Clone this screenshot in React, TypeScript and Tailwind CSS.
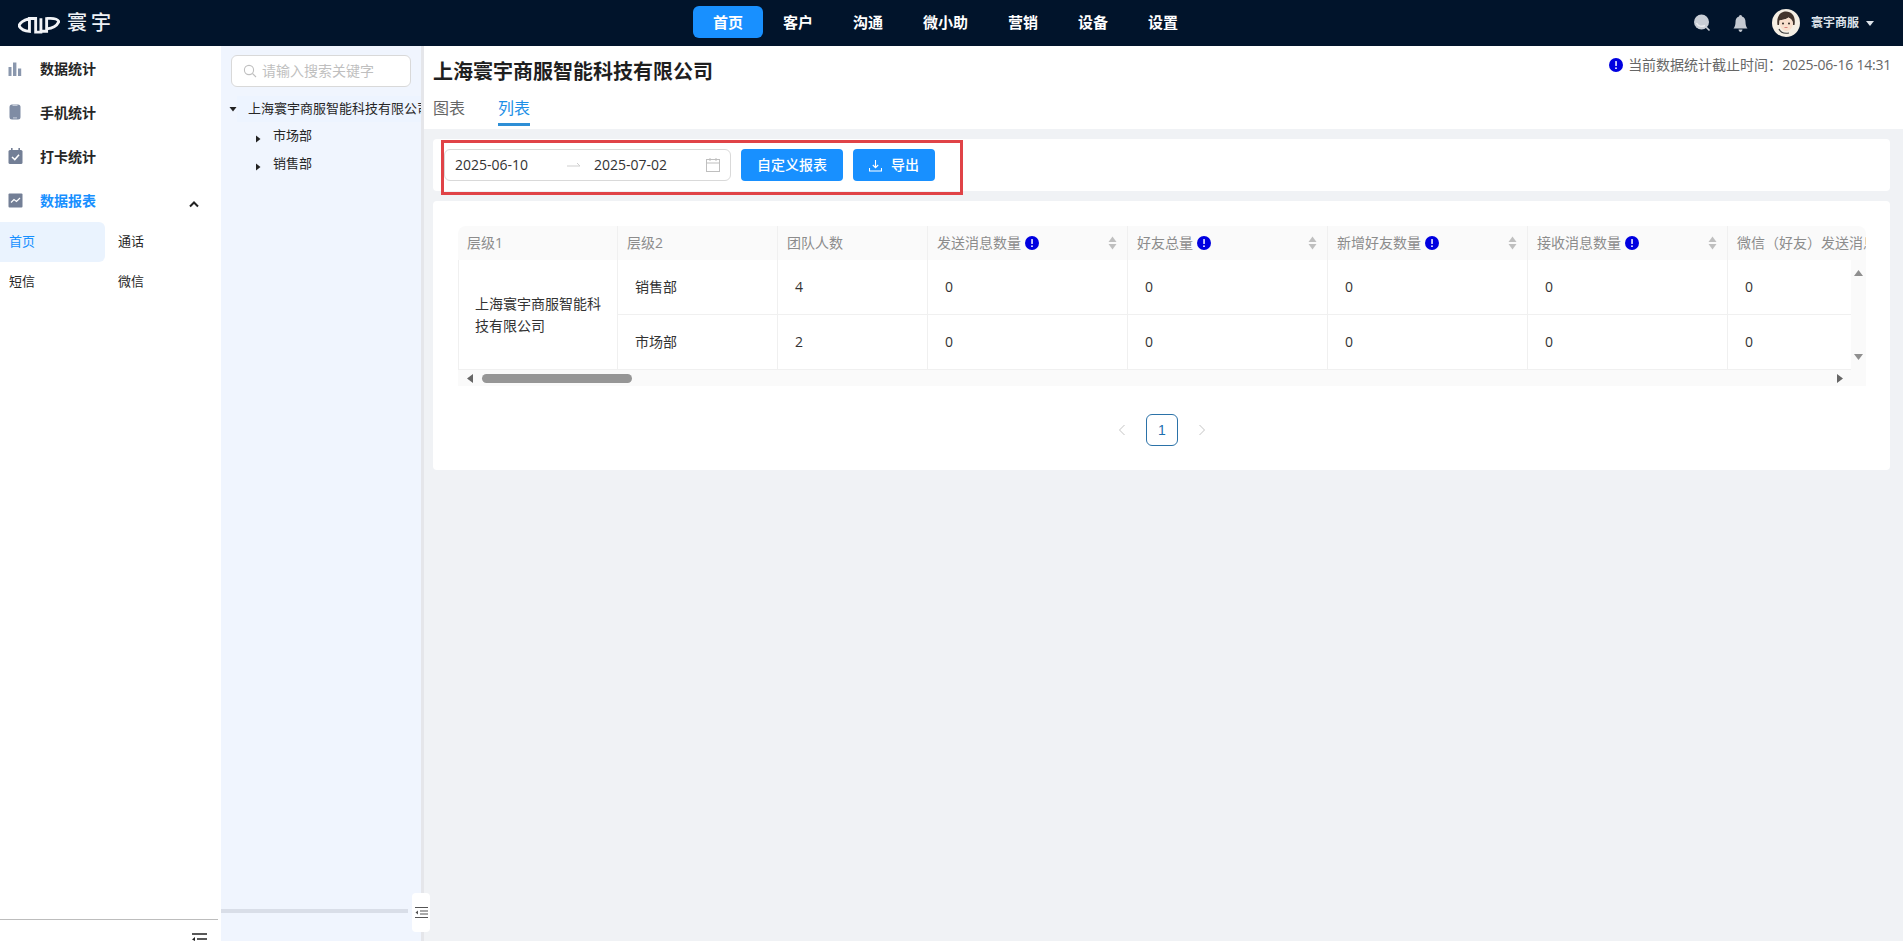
import React from "react";

const FONT = "font-['Open_Sans','Noto_Sans_CJK_SC',sans-serif]";

function Logo() {
  return (
    <svg width="42" height="18" viewBox="0 0 44 18" fill="none" stroke="#f2f4f7" strokeWidth="3" className="mt-[3px]">
      <path d="M11 2.5 C6 4 2 6.5 1 9.8 C3 13.5 8 15.5 12 15.7 V2.2 H18.5 V16.5 H24 V2 M24 15.5 H30 V1" />
      <path d="M30 2 H34 C38.5 2 42 3.5 42.8 5.5 C41 9.5 36.5 12.5 30 13" />
    </svg>
  );
}

function Avatar() {
  return (
    <svg width="28" height="28" viewBox="0 0 28 28">
      <circle cx="14" cy="14" r="14" fill="#f5efe4" />
      <path d="M5.5 16 C4 6 9.5 2.5 14 2.5 C20 2.5 24 7.5 22.5 16 L21 16 C21 11 18.5 9.5 16.5 8.5 C14 10.5 10.5 11 7.5 11.5 L7 16 Z" fill="#43352d" />
      <path d="M7.5 11.5 C10.5 11 14 10.5 16.5 8.5 C18.5 9.5 21 11 21 15 C20.5 19.5 17 22 14 22 C10.5 22 7.5 18.5 7.5 11.5 Z" fill="#f8dfcc" />
      <circle cx="11" cy="14.5" r="1" fill="#2e2622" />
      <circle cx="17" cy="14.5" r="1" fill="#2e2622" />
      <path d="M12.5 18.5 H15.5" stroke="#c66" strokeWidth="0.8" />
      <path d="M7 20 C9 24.5 14 24.5 17 24" stroke="#3d3d3d" strokeWidth="1.2" fill="none" />
    </svg>
  );
}

function Info({ size = 13 }: { size?: number }) {
  return (
    <svg width={size} height={size} viewBox="0 0 14 14" className="shrink-0">
      <circle cx="7" cy="7" r="7" fill="#0000e0" />
      <rect x="6.3" y="3" width="1.5" height="5" rx="0.6" fill="#fff" />
      <circle cx="7" cy="10.2" r="0.9" fill="#fff" />
    </svg>
  );
}

function Sort() {
  return (
    <svg width="9" height="14" viewBox="0 0 9 14" className="shrink-0">
      <path d="M4.5 0.5 L8.5 6 H0.5 Z" fill="#bfbfbf" />
      <path d="M4.5 13.5 L8.5 8 H0.5 Z" fill="#bfbfbf" />
    </svg>
  );
}

function Caret({ down }: { down?: boolean }) {
  return (
    <svg width="8" height="8" viewBox="0 0 8 8" className="shrink-0">
      {down ? <path d="M0.5 2 H7.5 L4 6.5 Z" fill="#222" /> : <path d="M2 0.5 V7.5 L6.5 4 Z" fill="#222" />}
    </svg>
  );
}

const navIcons: Record<string, React.ReactNode> = {
  bar: (
    <svg width="14" height="14" viewBox="0 0 14 14" fill="#8a97ad">
      <rect x="0.5" y="5" width="3" height="9" />
      <rect x="5" y="0.5" width="3.4" height="13.5" />
      <rect x="10" y="6.5" width="3.2" height="7.5" />
    </svg>
  ),
  phone: (
    <svg width="14" height="16" viewBox="0 0 14 16" className="-mt-[2px]">
      <rect x="1.5" y="0.5" width="11" height="15" rx="2.5" fill="#7f8ca4" />
      <rect x="4.5" y="0.5" width="5" height="1.4" fill="#c9d0dc" />
      <rect x="5" y="13.4" width="4" height="1" fill="#c9d0dc" />
    </svg>
  ),
  check: (
    <svg width="15" height="16" viewBox="0 0 15 16" className="-mt-[2px]">
      <rect x="0.5" y="2" width="14" height="14" rx="1.5" fill="#737f96" />
      <rect x="3" y="0" width="1.6" height="3.5" fill="#737f96" />
      <rect x="10.4" y="0" width="1.6" height="3.5" fill="#737f96" />
      <path d="M4 9 L6.8 11.6 L11 6.8" stroke="#fff" strokeWidth="1.5" fill="none" />
    </svg>
  ),
  line: (
    <svg width="15" height="15" viewBox="0 0 15 15" className="-mt-[2px]">
      <rect x="0.5" y="0.5" width="14" height="14" rx="1" fill="#737f96" />
      <path d="M3 9.5 L6 6.5 L8.5 8.5 L12 5" stroke="#fff" strokeWidth="1.2" fill="none" />
    </svg>
  ),
};

function NavItem({ icon, label, active, extra }: { icon: string; label: string; active?: boolean; extra?: React.ReactNode }) {
  return (
    <div className="flex h-11 items-center pl-2 pr-5">
      <span className="flex w-[32px] items-center">{navIcons[icon]}</span>
      <span className={`text-sm font-bold ${active ? "text-[#1890ff]" : "text-[#262626]"}`}>{label}</span>
      {extra}
    </div>
  );
}

const columns = [
  { label: "层级1", w: "w-[160px]" },
  { label: "层级2", w: "w-[160px]" },
  { label: "团队人数", w: "w-[150px]" },
  { label: "发送消息数量", w: "w-[200px]", sort: true },
  { label: "好友总量", w: "w-[200px]", sort: true },
  { label: "新增好友数量", w: "w-[200px]", sort: true },
  { label: "接收消息数量", w: "w-[200px]", sort: true },
  { label: "微信（好友）发送消息数量", w: "w-[200px]" },
];

function Row({ name, count, last }: { name: string; count: string; last?: boolean }) {
  const cell = "flex shrink-0 items-center border-r border-[#f0f0f0] pl-[17px]";
  return (
    <div className={`flex text-sm text-[#333] ${last ? "h-[54px]" : "h-[55px] border-b border-[#f0f0f0]"}`}>
      <div className={`${cell} w-[160px]`}>{name}</div>
      <div className={`${cell} w-[150px]`}>{count}</div>
      <div className={`${cell} w-[200px]`}>0</div>
      <div className={`${cell} w-[200px]`}>0</div>
      <div className={`${cell} w-[200px]`}>0</div>
      <div className={`${cell} w-[200px]`}>0</div>
      <div className={`${cell} w-[200px]`}>0</div>
    </div>
  );
}

export default function App() {
  return (
    <div className={`${FONT} flex h-[941px] w-[1903px] flex-col overflow-hidden bg-[#f0f2f5]`}>
      {/* Top bar */}
      <header className="relative flex h-[46px] shrink-0 items-center bg-[#01142b]">
        <div className="flex items-center pl-[18px]">
          <Logo />
          <span className="ml-[7px] text-[20px] font-medium tracking-[4px] text-[#eef1f5]">寰宇</span>
        </div>
        <nav className="absolute left-[693px] top-[6px] flex text-[15px] font-bold text-white">
          <span className="flex h-8 items-center rounded-md bg-[#1890ff] px-5">首页</span>
          {["客户", "沟通", "微小助", "营销", "设备", "设置"].map((t) => (
            <span key={t} className="flex h-8 items-center px-5">{t}</span>
          ))}
        </nav>
        <div className="ml-auto flex items-center pr-[29px]">
          <svg width="18" height="18" viewBox="0 0 18 18" className="mr-[22px]">
            <circle cx="8.5" cy="8" r="7.5" fill="#c9ced6" />
            <path d="M3.5 9 C5 12.5 9 13 12 11.5" stroke="#e9ebee" strokeWidth="1.5" fill="none" />
            <path d="M13 13 L16.5 16.5" stroke="#c9ced6" strokeWidth="1.6" />
          </svg>
          <svg width="15" height="19" viewBox="0 0 15 19" className="mr-[24px]">
            <path d="M7.5 1 C8.6 1 9 1.8 9 2.6 C11.5 3.4 12.5 5.5 12.5 8 C12.5 11 13.2 13 14.5 14.5 H0.5 C1.8 13 2.5 11 2.5 8 C2.5 5.5 3.5 3.4 6 2.6 C6 1.8 6.4 1 7.5 1 Z" fill="#c4c9d1" />
            <path d="M5.5 15.5 H9.5 C9.3 17 8.5 18 7.5 18 C6.5 18 5.7 17 5.5 15.5 Z" fill="#c4c9d1" />
          </svg>
          <Avatar />
          <span className="ml-[11px] text-xs font-bold text-[#dde3ea]">寰宇商服</span>
          <svg width="8" height="5" viewBox="0 0 8 5" className="ml-[7px]"><path d="M0 0 H8 L4 5 Z" fill="#dde3ea" /></svg>
        </div>
      </header>

      <div className="flex min-h-0 flex-1">
        {/* Left nav */}
        <aside className="relative flex w-[221px] shrink-0 flex-col bg-white pt-[1px]">
          <NavItem icon="bar" label="数据统计" />
          <NavItem icon="phone" label="手机统计" />
          <NavItem icon="check" label="打卡统计" />
          <NavItem
            icon="line"
            label="数据报表"
            active
            extra={
              <svg width="10" height="7" viewBox="0 0 10 7" className="ml-auto mr-[2px] mt-[6px]">
                <path d="M1 5.5 L5 1.5 L9 5.5" stroke="#222" strokeWidth="2" fill="none" />
              </svg>
            }
          />
          <div className="mt-[-1px] grid grid-cols-[105px_1fr] text-[13px] text-[#262626]">
            <div className="flex h-10 items-center rounded-r-md bg-[#eaf3fe] pl-[9px] text-[#1890ff]">首页</div>
            <div className="flex h-10 items-center pl-[13px]">通话</div>
            <div className="flex h-10 items-center pl-[9px]">短信</div>
            <div className="flex h-10 items-center pl-[13px]">微信</div>
          </div>
          <div className="absolute bottom-[21px] left-0 right-[3px] h-px bg-[#bdbdbd]" />
          <svg width="15" height="8" viewBox="0 0 15 8" className="absolute bottom-0 left-[192px]">
            <path d="M0 1 H15 M5 6 H15" stroke="#222" strokeWidth="1.4" />
            <path d="M3 4 L0 6.5 L3 8 Z" fill="#222" />
          </svg>
        </aside>

        {/* Tree panel */}
        <section className="relative flex w-[203px] shrink-0 flex-col overflow-visible border-r-[3px] border-[#e5e6ea] bg-[#f0f5fe]">
          <div className="mx-[10px] mt-[9px] flex h-8 w-[180px] items-center rounded-md border border-[#d9d9d9] bg-white pl-[11px] text-sm text-[#bfbfbf]">
            <svg width="14" height="14" viewBox="0 0 14 14" fill="none" stroke="#bfbfbf" strokeWidth="1.1" className="mr-[5px]">
              <circle cx="6" cy="6" r="4.6" />
              <path d="M9.5 9.5 L13 13" />
            </svg>
            请输入搜索关键字
          </div>
          <div className="mt-[9px] flex h-[26px] w-full items-center overflow-hidden pl-[8px] text-[13px] text-[#262626]">
            <span className="flex w-[11px]"><Caret down /></span>
            <span className="flex h-full flex-1 items-center whitespace-nowrap bg-[#edf4ff] pl-[11px]">上海寰宇商服智能科技有限公司</span>
          </div>
          {["市场部", "销售部"].map((t) => (
            <div key={t} className="flex h-7 items-center pl-[33px] text-[13px] text-[#262626]">
              <span className="mt-[5px] flex w-[19px]"><Caret /></span>
              {t}
            </div>
          ))}
          <div className="absolute bottom-[28px] left-0 h-1 w-[187px] bg-[#d9dee8]" />
          <div className="absolute bottom-[9px] left-[191px] z-10 flex h-[39px] w-[18px] items-center justify-center rounded-[4px] bg-white">
            <svg width="13" height="13" viewBox="0 0 13 13" stroke="#555" strokeWidth="1.1">
              <path d="M0 1.5 H13 M5 5 H13 M5 8 H13 M0 11.5 H13" />
              <path d="M3 4.5 L0.5 6.5 L3 8.5 Z" fill="#555" stroke="none" />
            </svg>
          </div>
        </section>

        {/* Main */}
        <main className="relative flex min-w-0 flex-1 flex-col">
          <div className="relative h-[83px] shrink-0 bg-white pl-[9px]">
            <h1 className="pt-[11px] text-xl leading-[30px] font-bold text-[#1f1f1f]">上海寰宇商服智能科技有限公司</h1>
            <div className="mt-[9px] flex text-base leading-6 text-[#666]">
              <span className="w-[65px]">图表</span>
              <span className="relative text-[#1d8fe6]">
                列表
                <span className="absolute -bottom-[6px] left-0 right-0 h-[3px] bg-[#2e8fd6]" />
              </span>
            </div>
            <div className="absolute right-[12px] top-[9px] flex items-center text-sm text-[#666]">
              <Info size={14} />
              <span className="ml-[5px]">当前数据统计截止时间：<span className="tracking-[-0.22px]">2025-06-16 14:31</span></span>
            </div>
          </div>

          <div className="ml-[9px] mr-[13px] mt-[10px] flex h-[52px] shrink-0 items-center rounded-[4px] bg-white pl-[11px]">
            <div className="flex h-8 w-[287px] items-center rounded-md border border-[#d9d9d9] pl-[10px] text-sm text-[#333]">
              <span className="w-[112px]">2025-06-10</span>
              <svg width="14" height="8" viewBox="0 0 14 8" fill="none" stroke="#cfcfcf" strokeWidth="1" className="mr-[13px]">
                <path d="M0 5 H13 M10 2 L13 5" />
              </svg>
              <span>2025-07-02</span>
              <svg width="14" height="14" viewBox="0 0 14 14" fill="none" stroke="#bfbfbf" className="ml-auto mr-[10px]">
                <rect x="0.5" y="1.5" width="13" height="12" />
                <path d="M0.5 5 H13.5 M4 0 V3 M10 0 V3" />
              </svg>
            </div>
            <button className="ml-[10px] flex h-8 w-[102px] items-center justify-center rounded-[4px] bg-[#1890ff] text-sm font-medium text-white">自定义报表</button>
            <button className="ml-[10px] flex h-8 w-[82px] items-center justify-center rounded-[4px] bg-[#1890ff] text-sm font-medium text-white">
              <svg width="13" height="13" viewBox="0 0 13 13" fill="none" stroke="#fff" strokeWidth="1.1" className="mr-[9px]">
                <path d="M6.5 1 V8.5 M3.8 6 L6.5 8.7 L9.2 6 M0.5 9 V12 H12.5 V9" />
              </svg>
              导出
            </button>
          </div>

          <div className="ml-[9px] mr-[13px] mt-[10px] h-[269px] shrink-0 rounded-[4px] bg-white pl-[25px] pr-6 pt-[25px]">
            <div className="w-[1408px] overflow-hidden rounded-t-lg">
              <div className="flex h-[34px] w-[1408px] overflow-hidden bg-[#fafafa] text-sm text-[#8c8c8c]">
                {columns.map((c) => (
                  <div key={c.label} className={`${c.w} flex shrink-0 items-center overflow-hidden whitespace-nowrap border-r border-[#f0f0f0] pl-[9px] pr-[10px]`}>
                    <span>{c.label}</span>
                    {c.sort && <span className="ml-1"><Info size={14} /></span>}
                    {c.sort && <span className="ml-auto"><Sort /></span>}
                  </div>
                ))}
              </div>
              <div className="flex">
                <div className="flex w-[1393px] overflow-hidden border-b border-l border-[#f0f0f0]">
                  <div className="flex w-[159px] shrink-0 items-center border-r border-[#f0f0f0] pl-[16px] pr-[15px] text-sm leading-[22px] text-[#333]">
                    上海寰宇商服智能科技有限公司
                  </div>
                  <div className="w-[1310px] shrink-0">
                    <Row name="销售部" count="4" />
                    <Row name="市场部" count="2" last />
                  </div>
                </div>
                <div className="flex w-[15px] flex-col items-center justify-between bg-[#fafafa] py-[10px]">
                  <svg width="9" height="6" viewBox="0 0 9 6"><path d="M4.5 0 L9 6 H0 Z" fill="#8f8f8f" /></svg>
                  <svg width="9" height="6" viewBox="0 0 9 6"><path d="M4.5 6 L9 0 H0 Z" fill="#8f8f8f" /></svg>
                </div>
              </div>
              <div className="flex h-4 w-[1408px] items-center bg-[#fafafa] pl-[9px] pr-[23px]">
                <svg width="6" height="9" viewBox="0 0 6 9"><path d="M0 4.5 L6 0 V9 Z" fill="#666" /></svg>
                <div className="ml-[9px] h-[9px] w-[150px] rounded-full bg-[#969696]" />
                <svg width="6" height="9" viewBox="0 0 6 9" className="ml-auto"><path d="M6 4.5 L0 0 V9 Z" fill="#666" /></svg>
              </div>
            </div>
            <div className="mt-[28px] flex w-full items-center justify-center text-sm">
              <svg width="8" height="12" viewBox="0 0 8 12" fill="none" stroke="#c4c4c4" strokeWidth="1" className="mr-[20px]"><path d="M6.5 1 L1.5 6 L6.5 11" /></svg>
              <span className="flex h-8 w-8 items-center justify-center rounded-md border border-[#2b72a8] font-['Liberation_Sans',sans-serif] text-[#1d6fae]">1</span>
              <svg width="8" height="12" viewBox="0 0 8 12" fill="none" stroke="#c4c4c4" strokeWidth="1" className="ml-[20px]"><path d="M1.5 1 L6.5 6 L1.5 11" /></svg>
            </div>
          </div>
        </main>
      </div>

      {/* Annotation drawn on the screenshot */}
      <div className="pointer-events-none absolute left-[441px] top-[140px] h-[55px] w-[522px] border-[3px] border-[#e04347]" />
    </div>
  );
}
